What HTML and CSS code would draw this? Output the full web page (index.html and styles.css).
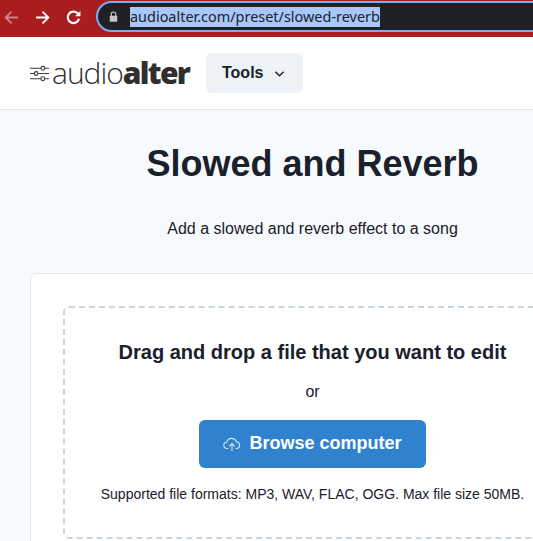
FILE: index.html
```html
<!DOCTYPE html>
<html lang="en">
<head>
    <meta charset="UTF-8">
    <meta name="viewport" content="width=device-width, initial-scale=1.0">
    <title>Slowed and Reverb</title>
    <link rel="stylesheet" href="styles.css">
</head>
<body>
    <div class="toolbar">
        <svg class="nav-icon dim" viewBox="0 0 16 16"><path d="M14 8H2.5M8 2.5 2.5 8 8 13.5"/></svg>
        <svg class="nav-icon" viewBox="0 0 16 16"><path d="M2 8h11.5M8 2.5 13.5 8 8 13.5"/></svg>
        <svg class="nav-icon reload" viewBox="0 0 16 16"><path d="M13.2 9.2A5.4 5.4 0 1 1 11.8 4L13.5 5.6"/><path class="solid" d="M14.5 1.8v5h-5z"/></svg>
        <div class="omnibox">
            <svg class="lock" viewBox="0 0 12 14"><path class="shackle" d="M3 6.5V4a3 3 0 0 1 6 0v2.5"/><rect x="1" y="6" width="10" height="8" rx="1"/></svg>
            <span class="url">audioalter.com/preset/slowed-reverb</span>
        </div>
    </div>

    <header class="site-header">
        <div class="logo">
            <svg class="logo-icon" viewBox="0 0 20 18">
                <path d="M0 3.5h11.5M15.5 3.5H20M0 9h4.5M8.5 9H20M0 14.5h11.5M15.5 14.5H20"/>
                <circle cx="13.5" cy="3.5" r="2"/>
                <circle cx="6.5" cy="9" r="2"/>
                <circle cx="13.5" cy="14.5" r="2"/>
            </svg>
            <span class="logo-text">audio<b>alter</b></span>
        </div>
        <button class="tools-btn">Tools
            <svg class="chevron" viewBox="0 0 12 8"><path d="M1.5 1.5 6 6l4.5-4.5"/></svg>
        </button>
    </header>

    <main class="main">
        <h1>Slowed and Reverb</h1>
        <p class="subtitle">Add a slowed and reverb effect to a song</p>
        <div class="card">
            <div class="dropzone">
                <h2>Drag and drop a file that you want to edit</h2>
                <p class="or">or</p>
                <button class="browse-btn">
                    <svg class="cloud" viewBox="0 0 20 16"><path d="M6 12.5H4.5a3.5 3.5 0 0 1-.3-7A5.5 5.5 0 0 1 14.8 5a3.8 3.8 0 0 1 .7 7.5H14"/><path d="M10 15.5V7.5M7 10l3-3 3 3"/></svg>
                    Browse computer
                </button>
                <p class="formats">Supported file formats: MP3, WAV, FLAC, OGG. Max file size 50MB.</p>
            </div>
        </div>
    </main>
</body>
</html>
```

FILE: styles.css
```css
html, body {
    height: 100%;
}
body {
    margin: 0;
    overflow: hidden;
    background-color: #f7fafc;
    color: #1a202c;
    font-family: "Liberation Sans", Arial, sans-serif;
}
.toolbar {
    display: flex;
    align-items: center;
    height: 37px;
    box-sizing: border-box;
    padding-left: 1px;
    background-color: #a91d1f;
    overflow: hidden;
}
.nav-icon {
    width: 17px;
    height: 17px;
    margin: 0 8px 2px 2px;
    flex: none;
    fill: none;
    stroke: #fff;
    stroke-width: 1.7;
}
.nav-icon.dim {
    opacity: 0.45;
    margin-right: 12px;
}
.nav-icon.reload {
    margin-left: 6px;
    margin-right: 14px;
    stroke-width: 2;
}
.nav-icon .solid {
    fill: #fff;
    stroke: none;
}
.omnibox {
    display: flex;
    align-items: center;
    flex: none;
    width: 470px;
    height: 31px;
    box-sizing: border-box;
    margin-bottom: 4px;
    padding-left: 11px;
    background-color: #202124;
    border: 2px solid #7cacf8;
    border-radius: 16px;
}
.lock {
    width: 9px;
    height: 11px;
    margin-right: 12px;
    fill: #c4c7c5;
}
.shackle {
    fill: none;
    stroke: #c4c7c5;
    stroke-width: 1.6;
}
.url {
    background-color: #a8c7fa;
    color: #202124;
    font-family: "Noto Sans", sans-serif;
    font-size: 14.45px;
    line-height: 20px;
}
.site-header {
    display: flex;
    align-items: center;
    height: 73px;
    box-sizing: border-box;
    padding: 0 0 0 30px;
    background-color: #fff;
    border-bottom: 1px solid #e2e8f0;
}
.logo {
    display: flex;
    align-items: center;
    width: 176px;
}
.logo-icon {
    width: 19px;
    height: 17px;
    margin-right: 3px;
    flex: none;
    fill: #fff;
    stroke: #3a3a3a;
    stroke-width: 1.2;
}
.logo-text {
    color: #2f2f2f;
    font-family: "Open Sans", sans-serif;
    font-size: 30px;
    font-weight: 300;
    letter-spacing: -1px;
    line-height: 36px;
    white-space: nowrap;
}
.logo-text b {
    font-weight: 800;
    letter-spacing: -1.7px;
}
.tools-btn {
    display: flex;
    align-items: center;
    gap: 11px;
    height: 40px;
    padding: 0 18px 0 16px;
    border: none;
    border-radius: 6px;
    background-color: #edf2f7;
    color: #1a202c;
    font-family: inherit;
    font-size: 16px;
    font-weight: 700;
}
.chevron {
    width: 11px;
    height: 8px;
    margin-top: 2px;
    fill: none;
    stroke: #1a202c;
    stroke-width: 1.5;
}
.main {
    width: 565px;
    padding: 0 30px;
    text-align: center;
}
h1 {
    margin: 0;
    padding-top: 32px;
    font-size: 36px;
    line-height: 43px;
}
.subtitle {
    margin: 0;
    padding-top: 32px;
    font-size: 16px;
    line-height: 24px;
}
.card {
    margin-top: 32px;
    padding: 32px;
    background-color: #fff;
    border: 1px solid #e2e8f0;
    border-radius: 6px;
}
.dropzone {
    padding: 32px 16px 33px;
    border: 2px dashed #cbd5e0;
    border-radius: 6px;
}
h2 {
    margin: 0;
    font-size: 20px;
    line-height: 24px;
}
.or {
    margin: 16px 0;
    font-size: 16px;
    line-height: 24px;
}
.browse-btn {
    display: inline-flex;
    align-items: center;
    gap: 8px;
    height: 48px;
    padding: 0 24px 2px;
    border: none;
    border-radius: 6px;
    background-color: #3182ce;
    color: #fff;
    font-family: inherit;
    font-size: 18px;
    font-weight: 700;
}
.cloud {
    width: 18px;
    height: 15px;
    margin-top: 2px;
    fill: none;
    stroke: #d5e5f5;
    stroke-width: 1.2;
}
.formats {
    margin: 16px 0 0;
    font-size: 14px;
    line-height: 20px;
}
```
